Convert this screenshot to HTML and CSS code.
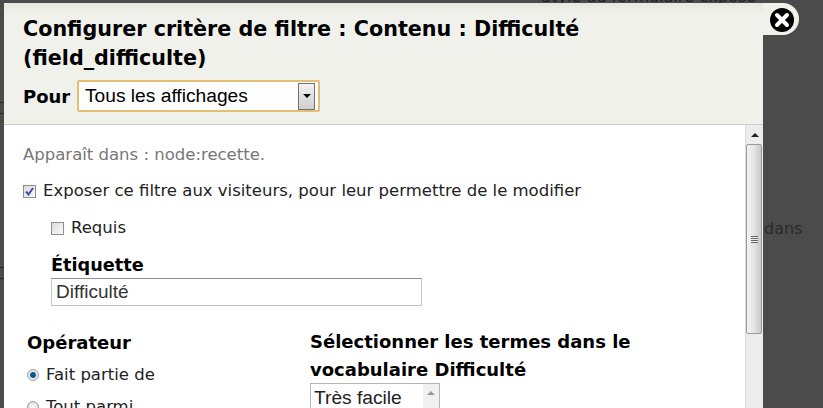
FILE: index.html
```html
<!DOCTYPE html>
<html lang="fr">
<head>
  <meta charset="UTF-8" />
  <title>Configurer critère de filtre</title>
  <link rel="stylesheet" href="styles.css">
</head>
<body>
  <!-- page behind the overlay -->
  <div class="behind-top">Style du formulaire exposé</div>
  <div class="behind-link">field</div>
  <div class="behind-word">dans</div>
  <div class="behind-line line-1"></div>
  <div class="behind-line line-2"></div>
  <div class="behind-line line-3"></div>
  <div class="behind-line line-4"></div>

  <div class="modal">
    <div class="close-tab">
      <svg width="24" height="24" viewBox="0 0 24 24">
        <circle cx="12" cy="12" r="12" fill="#000" />
        <path d="M7 7 L17 17 M17 7 L7 17" stroke="#fff" stroke-width="4" stroke-linecap="round" />
      </svg>
    </div>

    <div class="modal-header">
      <h1>Configurer critère de filtre : Contenu : Difficulté (field_difficulte)</h1>
      <div class="display-row">
        <label class="display-label">Pour</label>
        <div class="display-select">
          <span>Tous les affichages</span>
          <span class="select-btn"><i class="arrow-down"></i></span>
        </div>
      </div>
    </div>

    <div class="modal-body">
      <div class="modal-content">
        <p class="appears">Apparaît dans : node:recette.</p>

        <div class="check-row">
          <span class="checkbox">
            <svg width="9" height="9" viewBox="0 0 9 9"><path d="M1 4.5 L3.5 7.5 L8 1" fill="none" stroke="#3a4fa8" stroke-width="2" /></svg>
          </span>
          <span>Exposer ce filtre aux visiteurs, pour leur permettre de le modifier</span>
        </div>

        <div class="exposed-options">
          <div class="check-row required-row">
            <span class="checkbox"></span>
            <span>Requis</span>
          </div>
          <label class="field-label">Étiquette</label>
          <div class="text-input">Difficulté</div>
        </div>

        <div class="columns">
          <div class="col-operator">
            <label class="field-label">Opérateur</label>
            <div class="radio-row first">
              <span class="radio on"></span>
              <span>Fait partie de</span>
            </div>
            <div class="radio-row">
              <span class="radio"></span>
              <span>Tout parmi</span>
            </div>
          </div>
          <div class="col-terms">
            <label class="field-label terms-label">Sélectionner les termes dans le vocabulaire Difficulté</label>
            <div class="term-list">
              <span class="term">Très facile</span>
              <span class="term-scroll"><i class="arrow-up small"></i></span>
            </div>
          </div>
        </div>
      </div>

      <div class="scrollbar">
        <div class="scroll-up"><i class="arrow-up"></i></div>
        <div class="scroll-thumb"><span class="grip"></span></div>
      </div>
    </div>
  </div>
</body>
</html>
```

FILE: styles.css
```css
html, body {
  margin: 0;
  height: 100%;
}

body {
  position: relative;
  overflow: hidden;
  background: #4b4b4b;
  font-family: 'DejaVu Sans', sans-serif;
  font-size: 14px;
  color: #222;
}

.behind-top {
  position: absolute;
  left: 541px;
  top: -13px;
  font-size: 16px;
  color: #222;
}

.behind-link {
  position: absolute;
  left: 270px;
  top: -14px;
  font-size: 14px;
  color: #0b3c5d;
}

.behind-word {
  position: absolute;
  left: 764px;
  top: 219px;
  font-size: 16px;
  color: #2a2a2a;
}

.behind-line {
  position: absolute;
  left: 0;
  width: 4px;
  height: 1px;
  background: #2c2c2c;
}

.line-1 { top: 102px; }
.line-2 { top: 113px; }
.line-3 { top: 267px; }
.line-4 { top: 278px; }

.modal {
  position: absolute;
  left: 4px;
  top: 3px;
  width: 759px;
  height: 460px;
  display: flex;
  flex-direction: column;
  background: #fff;
}

.close-tab {
  position: absolute;
  left: 759px;
  top: 0;
  width: 36px;
  height: 32px;
  box-sizing: border-box;
  padding: 5px 0 0 7px;
  background: #f1f1ec;
  border-radius: 0 16px 16px 0;
}

.close-tab svg {
  display: block;
}

.modal-header {
  box-sizing: border-box;
  height: 122px;
  padding: 12px 19px 0;
  background: linear-gradient(#e6e7e1, #f1f1ec 10px);
  border-bottom: 1px solid #ccc;
}

h1 {
  margin: 0;
  font-size: 20.7px;
  line-height: 29px;
  font-weight: bold;
  color: #000;
  max-width: 620px;
}

.display-row {
  display: flex;
  align-items: center;
  margin-top: 7px;
}

.display-label {
  font-weight: bold;
  font-size: 18px;
  color: #000;
  width: 54px;
}

.display-select {
  box-sizing: border-box;
  width: 243px;
  height: 32px;
  display: flex;
  align-items: center;
  justify-content: space-between;
  padding: 0 3px 0 6px;
  background: #fff;
  border: 2px solid #e3bf74;
  border-radius: 2px;
  font-family: 'Liberation Sans', sans-serif;
  font-size: 19.2px;
  color: #000;
}

.select-btn {
  box-sizing: border-box;
  width: 17px;
  height: 27px;
  display: flex;
  align-items: center;
  justify-content: center;
  border: 1px solid #707070;
  background: linear-gradient(#f2f2f2, #cfcfcf);
}

.arrow-down {
  width: 0;
  height: 0;
  border-left: 4px solid transparent;
  border-right: 4px solid transparent;
  border-top: 4px solid #000;
}

.arrow-up {
  display: block;
  width: 0;
  height: 0;
  border-left: 4px solid transparent;
  border-right: 4px solid transparent;
  border-bottom: 4px solid #222;
}

.arrow-up.small {
  border-bottom-color: #999;
}

.modal-body {
  flex: 1;
  display: flex;
  min-height: 0;
}

.modal-content {
  flex: 1;
  padding: 21px 0 0 19px;
  font-size: 16.5px;
  color: #222;
}

.appears {
  margin: 0;
  color: #777;
  line-height: 18px;
}

.check-row {
  display: flex;
  align-items: center;
  gap: 7px;
  margin-top: 18px;
  line-height: 18px;
}

.checkbox {
  box-sizing: border-box;
  width: 13px;
  height: 13px;
  display: flex;
  align-items: center;
  justify-content: center;
  border: 1px solid #8e8e8e;
  background: linear-gradient(135deg, #dcdcdc, #fafafa);
}

.exposed-options {
  padding-left: 28px;
}

.required-row {
  margin-top: 19px;
}

.field-label {
  display: block;
  font-weight: bold;
  font-size: 18px;
  line-height: 28px;
  color: #000;
}

.exposed-options .field-label {
  margin-top: 15px;
  font-size: 17.7px;
  line-height: 26px;
}

.text-input {
  box-sizing: border-box;
  width: 371px;
  height: 28px;
  padding: 0 0 0 4px;
  line-height: 26px;
  border: 1px solid #c4c4c4;
  border-top-color: #8e8e8e;
  font-family: 'Liberation Sans', sans-serif;
  font-size: 19px;
  color: #333;
}

.columns {
  display: flex;
  margin-top: 23px;
}

.col-operator {
  width: 283px;
  padding-left: 4px;
}

.col-terms {
  width: 345px;
  margin-top: -1px;
}

.radio-row {
  display: flex;
  align-items: center;
  gap: 7px;
  margin-top: 14px;
  line-height: 18px;
}

.radio-row.first {
  margin-top: 9px;
}

.radio {
  box-sizing: border-box;
  width: 12px;
  height: 12px;
  border-radius: 50%;
  border: 1px solid #a0a0a0;
  background: radial-gradient(#fff, #d2d2d2);
}

.radio.on {
  background: radial-gradient(#0a5a94 0 2.5px, #e8e8e8 3.5px);
}

.terms-label {
  margin-bottom: -1px;
}

.term-list {
  box-sizing: border-box;
  width: 130px;
  height: 60px;
  display: flex;
  justify-content: space-between;
  border: 1px solid #b5b5b5;
  font-family: 'Liberation Sans', sans-serif;
  font-size: 19.2px;
  color: #222;
}

.term {
  padding: 3px 0 0 3px;
}

.term-scroll {
  width: 16px;
  display: flex;
  justify-content: center;
  padding-top: 7px;
  background: #f0f0f0;
}

.scrollbar {
  width: 17px;
  display: flex;
  flex-direction: column;
  background: #ececec;
  border-left: 1px solid #ddd;
}

.scroll-up {
  height: 19px;
  display: flex;
  align-items: center;
  justify-content: center;
}

.scroll-thumb {
  box-sizing: border-box;
  height: 190px;
  display: flex;
  align-items: center;
  justify-content: center;
  margin-right: 1px;
  border: 1px solid #999;
  border-radius: 2px;
  background: linear-gradient(90deg, #f4f4f4, #e4e4e4 50%, #c8c8c8);
}

.grip {
  width: 7px;
  height: 7px;
  background: repeating-linear-gradient(#666 0 1px, #eee 1px 2px);
}
```
